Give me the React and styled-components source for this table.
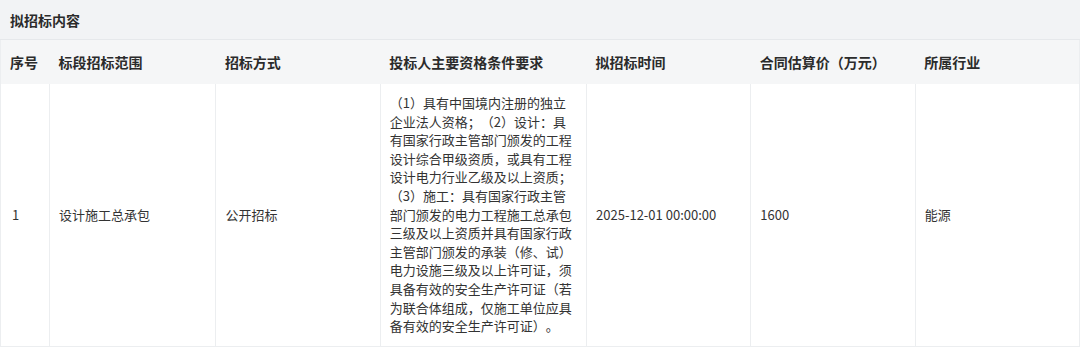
import React from 'react';
import styled, { createGlobalStyle } from 'styled-components';

const GlobalStyle = createGlobalStyle`
  html, body {
    margin: 0;
    padding: 0;
    background: #ffffff;
  }
  body {
    font-family: "Noto Sans CJK SC", "Noto Sans", sans-serif;
    color: #333333;
    text-spacing-trim: space-all;
  }
`;

const columns = [
  { key: 'no', title: '序号', width: 49 },
  { key: 'scope', title: '标段招标范围', width: 166 },
  { key: 'method', title: '招标方式', width: 164 },
  { key: 'qualify', title: '投标人主要资格条件要求', width: 206 },
  { key: 'time', title: '拟招标时间', width: 164 },
  { key: 'price', title: '合同估算价（万元）', width: 164 },
  { key: 'industry', title: '所属行业', width: 164 },
];

const rows = [
  {
    no: '1',
    scope: '设计施工总承包',
    method: '公开招标',
    qualify:
      '（1）具有中国境内注册的独立企业法人资格；（2）设计：具有国家行政主管部门颁发的工程设计综合甲级资质，或具有工程设计电力行业乙级及以上资质；（3）施工：具有国家行政主管部门颁发的电力工程施工总承包三级及以上资质并具有国家行政主管部门颁发的承装（修、试）电力设施三级及以上许可证，须具备有效的安全生产许可证（若为联合体组成，仅施工单位应具备有效的安全生产许可证）。',
    time: '2025-12-01 00:00:00',
    price: '1600',
    industry: '能源',
  },
];

const Panel = styled.section`
  width: 1080px;
  box-sizing: border-box;
`;

const PanelTitle = styled.div`
  height: 39px;
  display: flex;
  align-items: center;
  padding: 0 10px;
  background: #f2f3f5;
  border-bottom: 1px solid #e6e8eb;
  font-size: 14px;
  font-weight: 700;
  color: #2b2b2b;
`;

const Table = styled.table`
  width: 1080px;
  border-collapse: collapse;
  table-layout: fixed;
  border-left: 1px solid #eceef0;
  border-right: 1px solid #eceef0;
`;

const HeadCell = styled.th`
  height: 44px;
  padding: 0 9px;
  box-sizing: border-box;
  text-align: left;
  font-size: 14px;
  font-weight: 700;
  color: #2b2b2b;
  background: #f5f6f7;
`;

const Cell = styled.td`
  padding: 10px 9px;
  vertical-align: middle;
  font-size: 13px;
  line-height: 18.6px;
  color: #333333;
  border-left: 1px solid #eceef0;
  border-bottom: 1px solid #eceef0;
  word-break: break-all;

  &:first-child {
    border-left: none;
    padding-left: 11px;
  }
`;

export default function App() {
  return (
    <>
      <GlobalStyle />
      <Panel>
        <PanelTitle>拟招标内容</PanelTitle>
        <Table>
          <colgroup>
            {columns.map((c) => (
              <col key={c.key} style={{ width: c.width }} />
            ))}
          </colgroup>
          <thead>
            <tr>
              {columns.map((c) => (
                <HeadCell key={c.key}>{c.title}</HeadCell>
              ))}
            </tr>
          </thead>
          <tbody>
            {rows.map((r) => (
              <tr key={r.no}>
                {columns.map((c) => (
                  <Cell key={c.key}>{r[c.key]}</Cell>
                ))}
              </tr>
            ))}
          </tbody>
        </Table>
      </Panel>
    </>
  );
}
